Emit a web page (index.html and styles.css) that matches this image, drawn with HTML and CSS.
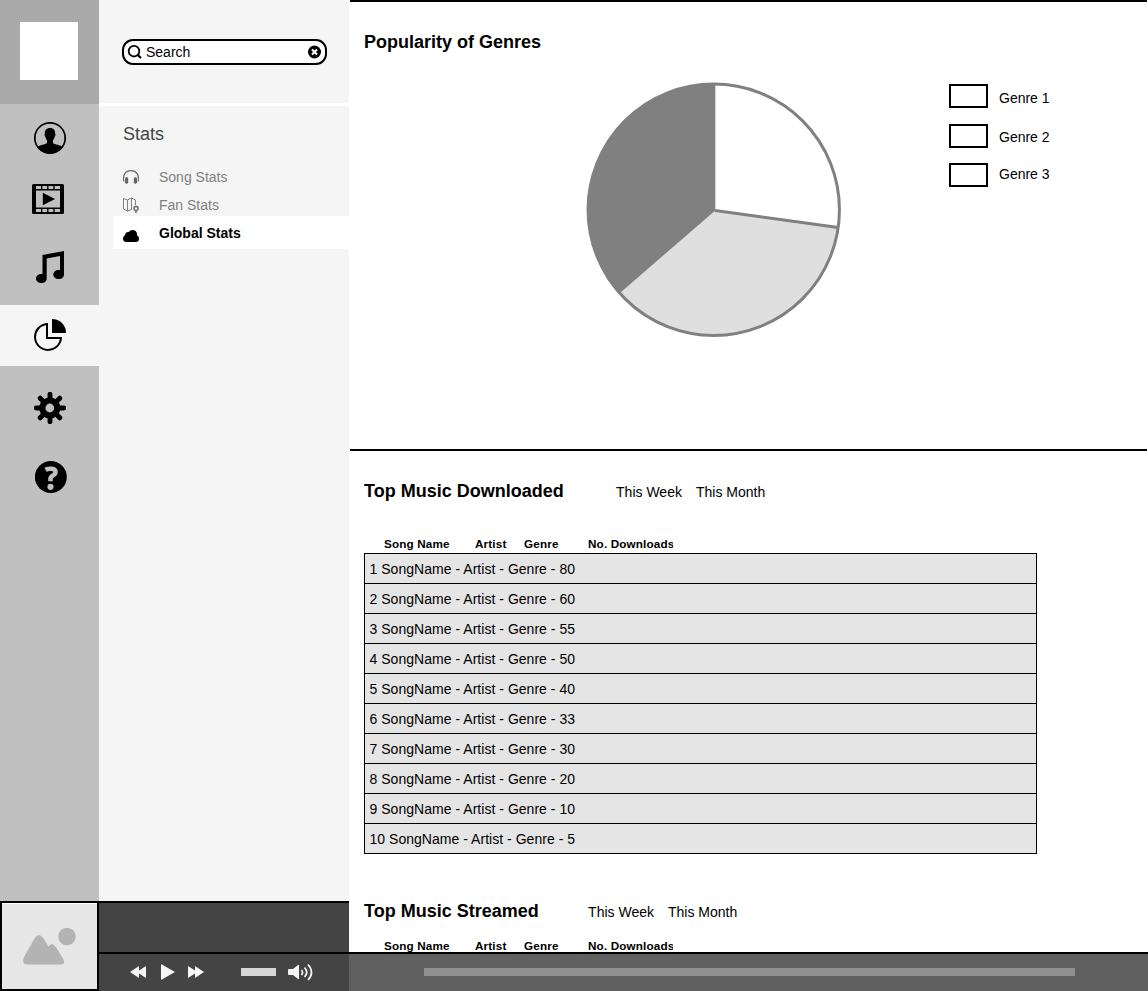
FILE: index.html
```html
<!doctype html>
<html lang="en">
<head>
    <meta charset="UTF-8">
    <title>Global Stats</title>
    <link rel="stylesheet" href="styles.css">
</head>
<body>
<div class="app">
    <div class="rail">
        <div class="brand"><div class="logo"></div></div>
        <ul class="railNav">
            <li class="user">
                <svg width="32" height="32" viewBox="0 0 32 32">
                    <circle cx="16" cy="16" r="15.200" fill="none" stroke="#000" stroke-width="1.700"/>
                    <path d="M16 6c-3.600 0-5.500 2.300-5.100 5.600-.8.500-.3 2.900.6 3.300.3 1.600.8 2.500 1.500 3.300v2.800c-1.500 1.600-7.500 1.800-10 4.200C5.500 28.900 10.500 31.500 16 31.500s10.500-2.600 13-6.300c-2.500-2.400-8.500-2.600-10-4.200v-2.800c.7-.8 1.200-1.700 1.500-3.300.9-.4 1.400-2.800.6-3.300C21.500 8.300 19.600 6 16 6z"/>
                </svg>
            </li>
            <li class="video">
                <svg width="32" height="30" viewBox="0 0 32 30">
                    <path fill-rule="evenodd" d="M1.500 0h29A1.500 1.500 0 0 1 32 1.500v27a1.500 1.500 0 0 1-1.500 1.500h-29A1.500 1.500 0 0 1 0 28.500v-27A1.500 1.500 0 0 1 1.500 0zM4 2V5h5V2zM10.300 2V5h4.800V2zM16.500 2V5h4.800V2zM22.700 2V5H28V2zM4 6.500v17h24V6.500zM4 25v3h5V25zM10.300 25v3h4.800V25zM16.500 25v3h4.800V25zM22.700 25v3H28V25z"/>
                    <path d="M10.800 8.800v12.400L23 15z"/>
                </svg>
            </li>
            <li class="music">
                <svg width="28" height="32" viewBox="0 0 28 32">
                    <path d="M6.500 4L28 0v23.400c0 2.900-2.500 4.700-5.300 4.700-3 0-5.400-1.900-5.400-4.500S19.700 19 22.700 19c.5 0 .9.100 1.300.2V5L10.700 7.600v19.800c0 2.800-2.500 4.600-5.300 4.600C2.400 32 0 30.100 0 27.500S2.400 23 5.400 23c.4 0 .7 0 1.100.1z"/>
                </svg>
            </li>
            <li class="stats active">
                <svg width="32" height="32" viewBox="0 0 32 32">
                    <path d="M18 0v14h14A14 14 0 0 0 18 0z"/>
                    <path d="M13 5A13 13 0 1 0 27 19H13z" fill="none" stroke="#000" stroke-width="2"/>
                </svg>
            </li>
            <li class="settings">
                <svg width="32" height="32" viewBox="0 0 32 32">
                    <circle cx="15.800" cy="16" r="7.500" fill="none" stroke="#000" stroke-width="6.200"/>
                    <path d="M16 7V2.300M16 25v4.700M7 16H2.300M25 16h4.700M9 9L6.200 6.200M23 23l2.800 2.800M23 9l2.800-2.800M9 23l-2.800 2.800" stroke="#000" stroke-width="4.900" stroke-linecap="round"/>
                </svg>
            </li>
            <li class="help">
                <svg width="32" height="32" viewBox="0 0 32 32">
                    <circle cx="15.800" cy="16" r="16"/>
                    <path d="M10.500 8.700c3-1.500 10-1.700 10 2.300 0 3.800-5 3-5 6.800v2.500" fill="none" stroke="#c0c0c0" stroke-width="4.600"/>
                    <circle cx="15.500" cy="25.800" r="3.100" fill="#c0c0c0"/>
                </svg>
            </li>
        </ul>
        <div class="cover">
            <svg width="53" height="38" viewBox="0 0 53 38">
                <path d="M1 30L11.500 11.500q4.500-7 9 0l5 8q3.500-5 7 0L40 31.500q3 6-2.500 6H4.500q-6.500 0-3.500-7.500z" fill="#b3b3b3"/>
                <circle cx="44" cy="9.500" r="8.700" fill="#b3b3b3"/>
            </svg>
        </div>
    </div>

    <div class="page">
        <div class="content">
            <div class="side">
                <div class="searchWrap">
                    <div class="search">
                        <svg width="14" height="14" viewBox="0 0 14 14" fill="none" stroke="#000" stroke-width="1.800">
                            <circle cx="6" cy="6.200" r="5.300"/>
                            <path d="M9.700 9.900l3.300 3.100" stroke-width="2.200"/>
                        </svg>
                        <span>Search</span>
                        <svg width="14" height="14" viewBox="0 0 14 14">
                            <circle cx="7.500" cy="7" r="6.500"/>
                            <path d="M5 4.500l5 5M10 4.500l-5 5" stroke="#fff" stroke-width="2"/>
                        </svg>
                    </div>
                </div>
                <div class="menu">
                    <h2>Stats</h2>
                    <ul>
                        <li>
                            <svg width="16" height="16" viewBox="0 0 16 16">
                                <path d="M.8 12.500C-.5 6 2.500 1.600 8 1.600s8.500 4.400 7.200 10.900" fill="none" stroke="#666" stroke-width="1.200"/>
                                <rect x="2" y="8.300" width="3.200" height="6.400" rx="1.400" fill="#666"/>
                                <rect x="10.800" y="8.300" width="3.200" height="6.400" rx="1.400" fill="#666"/>
                            </svg>
                            <span>Song Stats</span>
                        </li>
                        <li>
                            <svg width="16" height="16" viewBox="0 0 16 16">
                                <path d="M.5 1.500l4 1.500 4-2 4 2v5M.5 1.500V12l4 2.200 4-1.700M4.500 3v11M8.500 1v11.500" fill="none" stroke="#808080"/>
                                <path d="M13 8.500a3 3 0 0 1 3 3c0 1.800-1.700 2-2.500 4.500h-1c-.8-2.500-2.500-2.700-2.500-4.500a3 3 0 0 1 3-3zm0 2a1.100 1.100 0 1 0 0 2.200 1.100 1.100 0 0 0 0-2.200z" fill="#808080"/>
                            </svg>
                            <span>Fan Stats</span>
                        </li>
                        <li class="current">
                            <svg width="16" height="16" viewBox="0 0 16 16">
                                <path d="M3.500 14C1.300 14-.1 12.500 0 10.500c.1-1.700.9-2.800 2-3.300-.1-2.200 1.900-3.700 3.900-3.200C6.800 2.700 8.300 2 10 2.100c2.400.1 4.100 2 4.100 4.200 0 .4 0 .8-.1 1.200 1.300.6 2 1.900 2 3.400 0 1.800-1.400 3.100-3.200 3.100z"/>
                            </svg>
                            <span>Global Stats</span>
                        </li>
                    </ul>
                </div>
                <div class="nowPlaying"></div>
            </div>

            <div class="main">
                <div class="genres">
                    <h3>Popularity of Genres</h3>
                    <svg class="pie" width="258" height="258" viewBox="0 0 258 258">
                        <path d="M129 128.500V2.100A125.700 125.700 0 0 1 252.200 145.500z" fill="#fff"/>
                        <path d="M129 128.500L252.200 145.500A125.700 125.700 0 0 1 34 211z" fill="#dfdfdf"/>
                        <path d="M129.300 128.500V2.100A125.700 125.700 0 0 0 34 211z" fill="#808080"/>
                        <path d="M129 128.500L252.200 145.500" stroke="#808080" stroke-width="3"/>
                        <circle cx="127.750" cy="127.750" r="125.700" fill="none" stroke="#808080" stroke-width="3"/>
                    </svg>
                    <div class="legend">
                        <div class="swatches"><i></i><i></i><i></i></div>
                        <div class="labels">
                            <span>Genre 1</span>
                            <span>Genre 2</span>
                            <span>Genre 3</span>
                        </div>
                    </div>
                </div>

                <div class="top downloaded">
                    <div class="topHead">
                        <h3>Top Music Downloaded</h3>
                        <span>This Week</span>
                        <span>This Month</span>
                    </div>
                    <div class="cols">
                        <b>Song Name</b><b>Artist</b><b>Genre</b><b>No. Downloads</b>
                    </div>
                    <ul class="songs">
                        <li>1 SongName - Artist - Genre - 80</li>
                        <li>2 SongName - Artist - Genre - 60</li>
                        <li>3 SongName - Artist - Genre - 55</li>
                        <li>4 SongName - Artist - Genre - 50</li>
                        <li>5 SongName - Artist - Genre - 40</li>
                        <li>6 SongName - Artist - Genre - 33</li>
                        <li>7 SongName - Artist - Genre - 30</li>
                        <li>8 SongName - Artist - Genre - 20</li>
                        <li>9 SongName - Artist - Genre - 10</li>
                        <li>10 SongName - Artist - Genre - 5</li>
                    </ul>
                </div>

                <div class="top streamed">
                    <div class="topHead">
                        <h3>Top Music Streamed</h3>
                        <span>This Week</span>
                        <span>This Month</span>
                    </div>
                    <div class="cols">
                        <b>Song Name</b><b>Artist</b><b>Genre</b><b>No. Downloads</b>
                    </div>
                </div>
            </div>
        </div>

        <div class="player">
            <div class="controls">
                <svg class="prev" width="16" height="12" viewBox="0 0 16 12"><path d="M0 6l9-6v4.500L16 0v12L9 7.500V12z"/></svg>
                <svg class="play" width="14" height="16" viewBox="0 0 14 16"><path d="M0 0l14 8-14 8z"/></svg>
                <svg class="next" width="16" height="12" viewBox="0 0 16 12"><path d="M16 6L7 0v4.500L0 0v12l7-4.500V12z"/></svg>
                <div class="volume"></div>
                <svg class="speaker" width="26" height="18" viewBox="0 0 26 18">
                    <path d="M0 7q0-1 1-1h4l5-4h1v14h-1l-5-4H1q-1 0-1-1z"/>
                    <path d="M13.500 7q2 2.500 0 5M16.500 4.500q4.500 5 0 9.500M20 1.500q7 8 0 15.500" fill="none" stroke="#f5f5f5" stroke-width="1.700"/>
                </svg>
            </div>
            <div class="track"><div class="progress"></div></div>
        </div>
    </div>
</div>
</body>
</html>
```
FILE: styles.css
```css
* {
    margin: 0;
    padding: 0;
    box-sizing: border-box;
}

body {
    background: #fff;
    color: #000;
    font: 14px/16px "Liberation Sans", Arial, sans-serif;
    overflow: hidden;
}

ul {
    list-style: none;
}

svg {
    display: block;
    flex: none;
}

.app {
    display: flex;
    width: 1148px;
    height: 991px;
}

/* icon rail */
.rail {
    display: flex;
    flex-direction: column;
    width: 99px;
    background: #c0c0c0;
}

.brand {
    height: 104px;
    padding: 22px 20px;
    background: #a9a9a9;
}

.logo {
    width: 58px;
    height: 58px;
    background: #fff;
}

.railNav {
    flex: 1;
}

.railNav li {
    padding-left: 34px;
}

.railNav .user {
    height: 80px;
    padding-top: 18px;
}

.railNav .video {
    height: 67px;
    padding-left: 32px;
}

.railNav .music {
    height: 54px;
    padding-left: 36px;
}

.railNav .active {
    height: 61px;
    padding-top: 14px;
    background: #f5f5f5;
}

.railNav .settings {
    height: 95px;
    padding-top: 26px;
}

.railNav .help {
    padding-left: 35px;
}

.cover {
    height: 90px;
    padding: 24px 0 0 21px;
    border: 2px solid #000;
    background: #e6e6e6;
    box-shadow: inset 0 1px #fff;
}

/* right of the rail */
.page {
    flex: 1;
}

.content {
    display: flex;
    height: 952px;
}

.side {
    display: flex;
    flex-direction: column;
    width: 250px;
    background: #f5f5f5;
}

.searchWrap {
    height: 106px;
    padding: 39px 22px 0 23px;
    border-bottom: 3px solid #fff;
}

.search {
    display: flex;
    align-items: center;
    height: 26px;
    padding: 0 4px;
    border: 2px solid #000;
    border-radius: 11px;
    background: #fff;
}

.search svg {
    overflow: visible;
}

.search span {
    flex: 1;
    margin-left: 4px;
}

.menu {
    flex: 1;
}

.menu h2 {
    height: 58px;
    padding: 18px 0 0 24px;
    font-size: 18px;
    line-height: 21px;
    font-weight: normal;
    color: #444;
}

.menu li {
    display: flex;
    align-items: center;
    gap: 20px;
    height: 28px;
    margin-left: 14px;
    padding: 0 0 2px 10px;
    color: #808080;
}

.menu .current {
    height: 33px;
    margin-top: -4px;
    padding-bottom: 0;
    background: #fff;
    color: #000;
    font-weight: bold;
}

.menu .current svg {
    margin-top: 7px;
}

.nowPlaying {
    height: 51px;
    border-top: 2px solid #000;
    background: #444;
}

/* main column */
.main {
    flex: 1;
    margin-left: 1px;
    overflow: hidden;
}

.main h3 {
    padding-top: 1px;
    font-size: 18px;
    line-height: 21px;
}

.genres {
    display: flex;
    width: 797px;
    height: 451px;
    padding: 29px 0 0 14px;
    border-top: 2px solid #000;
    border-bottom: 2px solid #000;
}

.genres h3 {
    width: 222px;
}

.pie {
    margin-top: 51px;
}

.legend {
    display: flex;
    gap: 11px;
    margin: 53px 0 0 105px;
}

.swatches i {
    display: block;
    width: 39px;
    height: 24px;
    margin-bottom: 15.500px;
    border: 2px solid #000;
}

.labels {
    padding-top: 6px;
}

.labels span {
    display: block;
    margin-bottom: 23px;
}

.labels span:nth-child(2) {
    margin-bottom: 21px;
}

.top {
    padding-left: 14px;
}

.downloaded {
    height: 449px;
    padding-top: 29px;
}

.topHead {
    display: flex;
    gap: 14px;
    height: 21px;
}

.topHead h3 {
    margin-right: 38.400px;
}

.topHead span {
    padding-top: 4px;
}

.streamed .topHead h3 {
    margin-right: 35.400px;
}

.cols {
    display: flex;
    padding: 36px 0 0 20px;
    font-size: 11.700px;
    line-height: 14px;
    letter-spacing: .15px;
    white-space: nowrap;
}

.streamed .cols {
    padding-top: 18px;
}

.cols b {
    width: 91px;
}

.cols b:nth-child(2) {
    width: 49px;
}

.cols b:nth-child(3) {
    width: 64px;
}

.cols b:last-child {
    width: 85px;
    overflow: hidden;
}

.songs {
    width: 673px;
    margin-top: 2px;
    border: 1px solid #000;
    border-bottom: 0;
    background: #e5e5e5;
}

.songs li {
    height: 30px;
    padding: 7px 0 0 4.500px;
    border-bottom: 1px solid #000;
    letter-spacing: .03px;
}

/* player bar */
.player {
    display: flex;
    height: 39px;
    border-top: 2px solid #000;
    background: #606060;
}

.controls {
    display: flex;
    align-items: center;
    width: 250px;
    padding: 0 0 1px 31px;
    background: #444;
    fill: #f5f5f5;
}

.play {
    margin: 0 13px 0 15px;
}

.volume {
    width: 35px;
    height: 8px;
    margin: 0 12px 0 37px;
    background: #d6d6d6;
}

.track {
    padding: 14px 0 0 75px;
}

.progress {
    width: 651px;
    height: 8px;
    background: #919191;
}
```
